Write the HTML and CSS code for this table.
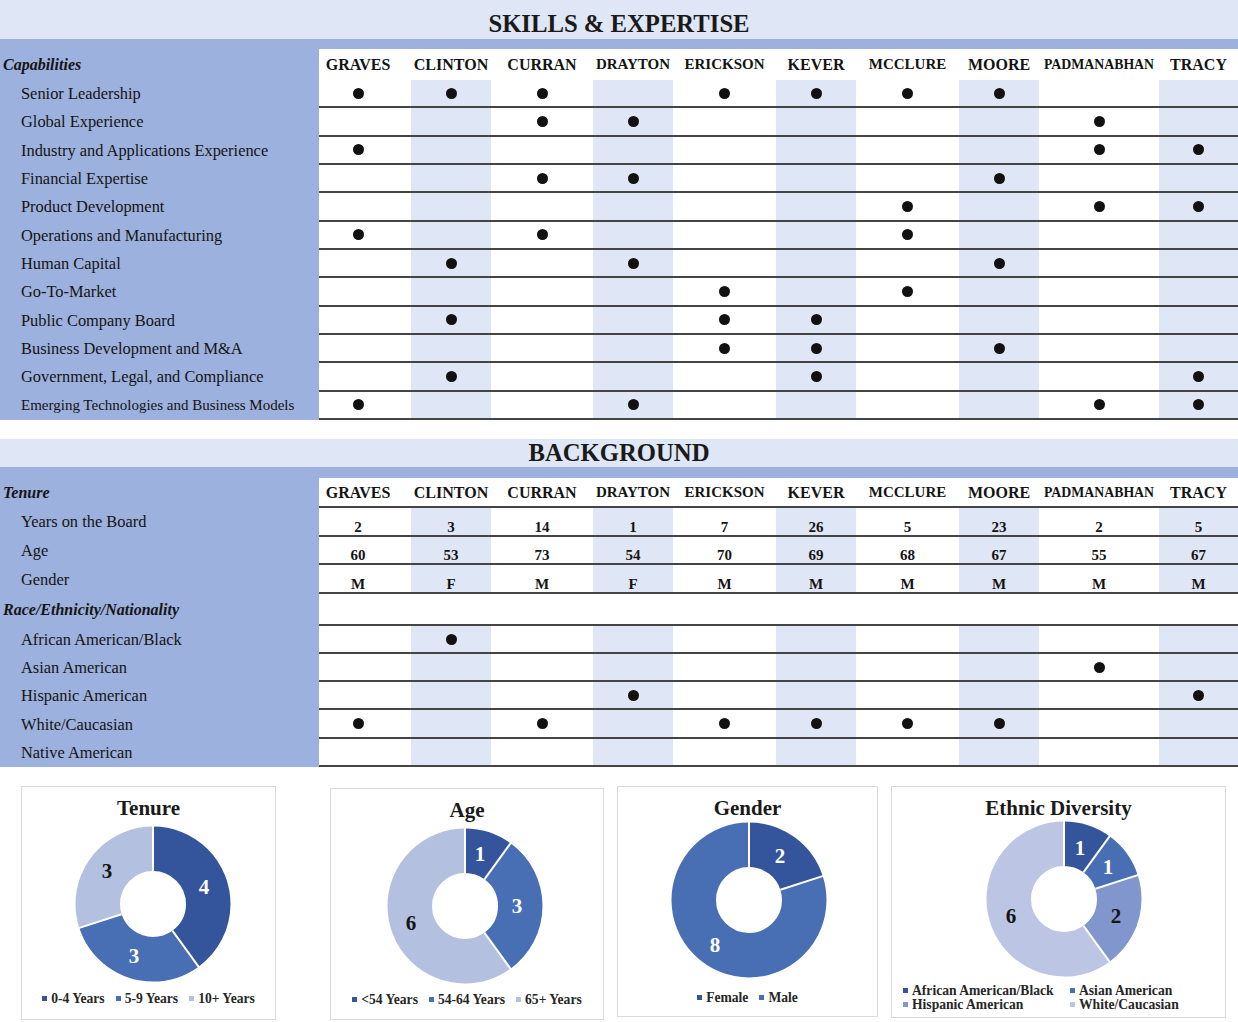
FILE: index.html
```html
<!DOCTYPE html>
<html lang="en">
<head>
<meta charset="utf-8">
<title>Board Skills &amp; Background</title>
<link rel="stylesheet" href="styles.css">
</head>
<body>
<section class="sec">
  <div class="title title-skills">SKILLS &amp; EXPERTISE</div>
  <div class="band"></div>
  <div class="row hrow">
    <div class="lab cat">Capabilities</div>
    <div class="h">GRAVES</div><div class="h">CLINTON</div><div class="h">CURRAN</div><div class="h sm">DRAYTON</div><div class="h sm">ERICKSON</div><div class="h">KEVER</div><div class="h sm">MCCLURE</div><div class="h">MOORE</div><div class="h xs">PADMANABHAN</div><div class="h">TRACY</div>
  </div>
  <div class="row data">
    <div class="lab">Senior Leadership</div>
    <div class="c"><i class="dot"></i></div><div class="c"><i class="dot"></i></div><div class="c"><i class="dot"></i></div><div class="c"></div><div class="c"><i class="dot"></i></div><div class="c"><i class="dot"></i></div><div class="c"><i class="dot"></i></div><div class="c"><i class="dot"></i></div><div class="c"></div><div class="c"></div>
  </div>
  <div class="row data">
    <div class="lab">Global Experience</div>
    <div class="c"></div><div class="c"></div><div class="c"><i class="dot"></i></div><div class="c"><i class="dot"></i></div><div class="c"></div><div class="c"></div><div class="c"></div><div class="c"></div><div class="c"><i class="dot"></i></div><div class="c"></div>
  </div>
  <div class="row data">
    <div class="lab">Industry and Applications Experience</div>
    <div class="c"><i class="dot"></i></div><div class="c"></div><div class="c"></div><div class="c"></div><div class="c"></div><div class="c"></div><div class="c"></div><div class="c"></div><div class="c"><i class="dot"></i></div><div class="c"><i class="dot"></i></div>
  </div>
  <div class="row data">
    <div class="lab">Financial Expertise</div>
    <div class="c"></div><div class="c"></div><div class="c"><i class="dot"></i></div><div class="c"><i class="dot"></i></div><div class="c"></div><div class="c"></div><div class="c"></div><div class="c"><i class="dot"></i></div><div class="c"></div><div class="c"></div>
  </div>
  <div class="row data">
    <div class="lab">Product Development</div>
    <div class="c"></div><div class="c"></div><div class="c"></div><div class="c"></div><div class="c"></div><div class="c"></div><div class="c"><i class="dot"></i></div><div class="c"></div><div class="c"><i class="dot"></i></div><div class="c"><i class="dot"></i></div>
  </div>
  <div class="row data">
    <div class="lab">Operations and Manufacturing</div>
    <div class="c"><i class="dot"></i></div><div class="c"></div><div class="c"><i class="dot"></i></div><div class="c"></div><div class="c"></div><div class="c"></div><div class="c"><i class="dot"></i></div><div class="c"></div><div class="c"></div><div class="c"></div>
  </div>
  <div class="row data">
    <div class="lab">Human Capital</div>
    <div class="c"></div><div class="c"><i class="dot"></i></div><div class="c"></div><div class="c"><i class="dot"></i></div><div class="c"></div><div class="c"></div><div class="c"></div><div class="c"><i class="dot"></i></div><div class="c"></div><div class="c"></div>
  </div>
  <div class="row data">
    <div class="lab">Go-To-Market</div>
    <div class="c"></div><div class="c"></div><div class="c"></div><div class="c"></div><div class="c"><i class="dot"></i></div><div class="c"></div><div class="c"><i class="dot"></i></div><div class="c"></div><div class="c"></div><div class="c"></div>
  </div>
  <div class="row data">
    <div class="lab">Public Company Board</div>
    <div class="c"></div><div class="c"><i class="dot"></i></div><div class="c"></div><div class="c"></div><div class="c"><i class="dot"></i></div><div class="c"><i class="dot"></i></div><div class="c"></div><div class="c"></div><div class="c"></div><div class="c"></div>
  </div>
  <div class="row data">
    <div class="lab">Business Development and M&amp;A</div>
    <div class="c"></div><div class="c"></div><div class="c"></div><div class="c"></div><div class="c"><i class="dot"></i></div><div class="c"><i class="dot"></i></div><div class="c"></div><div class="c"><i class="dot"></i></div><div class="c"></div><div class="c"></div>
  </div>
  <div class="row data">
    <div class="lab">Government, Legal, and Compliance</div>
    <div class="c"></div><div class="c"><i class="dot"></i></div><div class="c"></div><div class="c"></div><div class="c"></div><div class="c"><i class="dot"></i></div><div class="c"></div><div class="c"></div><div class="c"></div><div class="c"><i class="dot"></i></div>
  </div>
  <div class="row data">
    <div class="lab lab-small">Emerging Technologies and Business Models</div>
    <div class="c"><i class="dot"></i></div><div class="c"></div><div class="c"></div><div class="c"><i class="dot"></i></div><div class="c"></div><div class="c"></div><div class="c"></div><div class="c"></div><div class="c"><i class="dot"></i></div><div class="c"><i class="dot"></i></div>
  </div>
</section>

<section class="sec sec-bg">
  <div class="title title-bg">BACKGROUND</div>
  <div class="band band-bg"></div>
  <div class="row hrow hrow-bg">
    <div class="lab cat">Tenure</div>
    <div class="h">GRAVES</div><div class="h">CLINTON</div><div class="h">CURRAN</div><div class="h sm">DRAYTON</div><div class="h sm">ERICKSON</div><div class="h">KEVER</div><div class="h sm">MCCLURE</div><div class="h">MOORE</div><div class="h xs">PADMANABHAN</div><div class="h">TRACY</div>
  </div>
  <div class="row data vrow">
    <div class="lab">Years on the Board</div>
    <div class="c v">2</div><div class="c v">3</div><div class="c v">14</div><div class="c v">1</div><div class="c v">7</div><div class="c v">26</div><div class="c v">5</div><div class="c v">23</div><div class="c v">2</div><div class="c v">5</div>
  </div>
  <div class="row data vrow">
    <div class="lab">Age</div>
    <div class="c v">60</div><div class="c v">53</div><div class="c v">73</div><div class="c v">54</div><div class="c v">70</div><div class="c v">69</div><div class="c v">68</div><div class="c v">67</div><div class="c v">55</div><div class="c v">67</div>
  </div>
  <div class="row data vrow">
    <div class="lab">Gender</div>
    <div class="c v">M</div><div class="c v">F</div><div class="c v">M</div><div class="c v">F</div><div class="c v">M</div><div class="c v">M</div><div class="c v">M</div><div class="c v">M</div><div class="c v">M</div><div class="c v">M</div>
  </div>
  <div class="row race">
    <div class="lab cat">Race/Ethnicity/Nationality</div>
    <div class="c"></div><div class="c"></div><div class="c"></div><div class="c"></div><div class="c"></div><div class="c"></div><div class="c"></div><div class="c"></div><div class="c"></div><div class="c"></div>
  </div>
  <div class="row data erow">
    <div class="lab">African American/Black</div>
    <div class="c"></div><div class="c"><i class="dot"></i></div><div class="c"></div><div class="c"></div><div class="c"></div><div class="c"></div><div class="c"></div><div class="c"></div><div class="c"></div><div class="c"></div>
  </div>
  <div class="row data erow">
    <div class="lab">Asian American</div>
    <div class="c"></div><div class="c"></div><div class="c"></div><div class="c"></div><div class="c"></div><div class="c"></div><div class="c"></div><div class="c"></div><div class="c"><i class="dot"></i></div><div class="c"></div>
  </div>
  <div class="row data erow">
    <div class="lab">Hispanic American</div>
    <div class="c"></div><div class="c"></div><div class="c"></div><div class="c"><i class="dot"></i></div><div class="c"></div><div class="c"></div><div class="c"></div><div class="c"></div><div class="c"></div><div class="c"><i class="dot"></i></div>
  </div>
  <div class="row data erow">
    <div class="lab">White/Caucasian</div>
    <div class="c"><i class="dot"></i></div><div class="c"></div><div class="c"><i class="dot"></i></div><div class="c"></div><div class="c"><i class="dot"></i></div><div class="c"><i class="dot"></i></div><div class="c"><i class="dot"></i></div><div class="c"><i class="dot"></i></div><div class="c"></div><div class="c"></div>
  </div>
  <div class="row data erow">
    <div class="lab">Native American</div>
    <div class="c"></div><div class="c"></div><div class="c"></div><div class="c"></div><div class="c"></div><div class="c"></div><div class="c"></div><div class="c"></div><div class="c"></div><div class="c"></div>
  </div>
</section>

<section class="charts">
  <div class="chart tenure">
    <div class="chart-title">Tenure</div>
    <svg class="donut" width="160" height="160" viewBox="0 0 160 160">
      <g transform="rotate(-90 80 80)">
        <circle class="seg s1" cx="80" cy="80" r="55.25" stroke-dasharray="138.86 208.29" stroke-dashoffset="0"/>
        <circle class="seg s2" cx="80" cy="80" r="55.25" stroke-dasharray="104.14 243.01" stroke-dashoffset="-138.86"/>
        <circle class="seg s4" cx="80" cy="80" r="55.25" stroke-dasharray="104.14 243.01" stroke-dashoffset="-243.0"/>
      </g>
      <line class="sep" x1="80" y1="47" x2="80" y2="1"/>
      <line class="sep" x1="80" y1="47" x2="80" y2="1" transform="rotate(144 80 80)"/>
      <line class="sep" x1="80" y1="47" x2="80" y2="1" transform="rotate(252 80 80)"/>
      <text class="lbl w" x="131" y="63">4</text>
      <text class="lbl w" x="61" y="132">3</text>
      <text class="lbl" x="34" y="47">3</text>
    </svg>
    <div class="legend">
      <span class="li"><i class="mk m1"></i>0-4 Years</span>
      <span class="li"><i class="mk m2"></i>5-9 Years</span>
      <span class="li"><i class="mk m4"></i>10+ Years</span>
    </div>
  </div>

  <div class="chart age">
    <div class="chart-title">Age</div>
    <svg class="donut" width="160" height="160" viewBox="0 0 160 160">
      <g transform="rotate(-90 80 80)">
        <circle class="seg s1" cx="80" cy="80" r="55.25" stroke-dasharray="34.71 312.44" stroke-dashoffset="0"/>
        <circle class="seg s2" cx="80" cy="80" r="55.25" stroke-dasharray="104.14 243.01" stroke-dashoffset="-34.71"/>
        <circle class="seg s4" cx="80" cy="80" r="55.25" stroke-dasharray="208.29 138.86" stroke-dashoffset="-138.86"/>
      </g>
      <line class="sep" x1="80" y1="47" x2="80" y2="1"/>
      <line class="sep" x1="80" y1="47" x2="80" y2="1" transform="rotate(36 80 80)"/>
      <line class="sep" x1="80" y1="47" x2="80" y2="1" transform="rotate(144 80 80)"/>
      <text class="lbl w" x="95" y="28">1</text>
      <text class="lbl w" x="132" y="80">3</text>
      <text class="lbl" x="26" y="97">6</text>
    </svg>
    <div class="legend">
      <span class="li"><i class="mk m1"></i>&lt;54 Years</span>
      <span class="li"><i class="mk m2"></i>54-64 Years</span>
      <span class="li"><i class="mk m4"></i>65+ Years</span>
    </div>
  </div>

  <div class="chart gender">
    <div class="chart-title">Gender</div>
    <svg class="donut" width="160" height="160" viewBox="0 0 160 160">
      <g transform="rotate(-90 80 80)">
        <circle class="seg s1" cx="80" cy="80" r="55.25" stroke-dasharray="69.43 277.72" stroke-dashoffset="0"/>
        <circle class="seg s2" cx="80" cy="80" r="55.25" stroke-dasharray="277.72 69.43" stroke-dashoffset="-69.43"/>
      </g>
      <line class="sep" x1="80" y1="47" x2="80" y2="1"/>
      <line class="sep" x1="80" y1="47" x2="80" y2="1" transform="rotate(72 80 80)"/>
      <text class="lbl w" x="111" y="36">2</text>
      <text class="lbl w" x="46" y="125">8</text>
    </svg>
    <div class="legend">
      <span class="li"><i class="mk m1"></i>Female</span>
      <span class="li"><i class="mk m2"></i>Male</span>
    </div>
  </div>

  <div class="chart ethnic">
    <div class="chart-title">Ethnic Diversity</div>
    <svg class="donut" width="160" height="160" viewBox="0 0 160 160">
      <g transform="rotate(-90 80 80)">
        <circle class="seg s1" cx="80" cy="80" r="55.25" stroke-dasharray="34.71 312.44" stroke-dashoffset="0"/>
        <circle class="seg s2" cx="80" cy="80" r="55.25" stroke-dasharray="34.71 312.44" stroke-dashoffset="-34.71"/>
        <circle class="seg s3" cx="80" cy="80" r="55.25" stroke-dasharray="69.43 277.72" stroke-dashoffset="-69.43"/>
        <circle class="seg s5" cx="80" cy="80" r="55.25" stroke-dasharray="208.29 138.86" stroke-dashoffset="-138.86"/>
      </g>
      <line class="sep" x1="80" y1="47" x2="80" y2="1"/>
      <line class="sep" x1="80" y1="47" x2="80" y2="1" transform="rotate(36 80 80)"/>
      <line class="sep" x1="80" y1="47" x2="80" y2="1" transform="rotate(72 80 80)"/>
      <line class="sep" x1="80" y1="47" x2="80" y2="1" transform="rotate(144 80 80)"/>
      <text class="lbl w" x="96" y="29">1</text>
      <text class="lbl w" x="124" y="48">1</text>
      <text class="lbl" x="132" y="97">2</text>
      <text class="lbl" x="27" y="97">6</text>
    </svg>
    <div class="legend legend-grid">
      <span class="li"><i class="mk m1"></i>African American/Black</span>
      <span class="li"><i class="mk m2"></i>Asian American</span>
      <span class="li"><i class="mk m3"></i>Hispanic American</span>
      <span class="li"><i class="mk m5"></i>White/Caucasian</span>
    </div>
  </div>
</section>
</body>
</html>
```

FILE: styles.css
```css
* { box-sizing: border-box; }

body {
  margin: 0;
  width: 1238px;
  background: #ffffff;
  color: #141414;
  font-family: "Liberation Serif", "Times New Roman", serif;
}

.title {
  display: flex;
  align-items: center;
  justify-content: center;
  background: #dfe6f5;
  font-size: 24.7px;
  font-weight: bold;
  color: #1a1a1a;
}
.title-skills { height: 39px; padding-top: 8px; }
.title-bg { height: 28px; padding-top: 1px; }

.band { height: 10px; background: #9cb1dd; }
.band-bg { height: 11px; }

.sec-bg { margin-top: 19px; }

.row {
  display: grid;
  grid-template-columns: 319px 92px 80px 102px 80px 103px 80px 103px 80px 120px 79px;
}

.lab {
  display: flex;
  align-items: center;
  padding-left: 21px;
  background: #9cb1dd;
  font-size: 16.4px;
  white-space: nowrap;
}
.lab.cat {
  padding-left: 3px;
  font-size: 16px;
  font-weight: bold;
  font-style: italic;
}
.lab-small { font-size: 15px; }

.h {
  display: flex;
  align-items: center;
  justify-content: center;
  font-size: 16px;
  font-weight: bold;
  white-space: nowrap;
}
.h.sm { font-size: 15px; }
.h.xs { font-size: 13.8px; }
.row > :nth-child(2) { padding-right: 14px; }

.hrow { height: 31px; }
.hrow-bg { height: 30px; }
.hrow-bg .h { border-bottom: 2px solid #454545; padding-top: 2px; }

.c {
  display: flex;
  align-items: center;
  justify-content: center;
  border-bottom: 2px solid #454545;
}
.data > :nth-child(2n+3) { background: #dfe6f5; }

.data { height: 28.33px; }
.vrow { height: 28.67px; }
.race { height: 32px; }
.erow { height: 28.2px; }

.v {
  align-items: flex-end;
  padding-bottom: 0;
  font-size: 15px;
  line-height: 15px;
  font-weight: bold;
}

.dot {
  display: block;
  width: 11px;
  height: 11px;
  border-radius: 50%;
  background: #111111;
}

/* charts */
.charts {
  display: flex;
  align-items: flex-start;
  margin-top: 19px;
  padding-left: 21px;
}
.chart {
  display: flex;
  flex-direction: column;
  align-items: center;
  border: 1px solid #d9d9d9;
}
.chart.tenure { width: 255px; height: 234px; }
.chart.age { width: 274px; height: 232px; margin-left: 54px; margin-top: 2px; }
.chart.gender { width: 261px; height: 231px; margin-left: 13px; }
.chart.ethnic { width: 335px; height: 232px; margin-left: 13px; }

.chart-title {
  margin-top: 9px;
  font-size: 21px;
  line-height: 24px;
  font-weight: bold;
  color: #1a1a1a;
}

.donut { display: block; overflow: visible; }
.tenure .donut { margin-top: 4px; margin-left: 9px; }
.age .donut { margin-top: 4px; margin-left: -5px; }
.gender .donut { margin-top: 0; margin-left: 3px; }
.ethnic .donut { margin-top: -1px; margin-left: 10px; }

.seg { fill: none; stroke-width: 44.5; }
.s1 { stroke: #34549b; }
.s2 { stroke: #486eb4; }
.s3 { stroke: #8096cc; }
.s4 { stroke: #b4c0e0; }
.s5 { stroke: #bcc6e4; }

.sep { stroke: #ffffff; stroke-width: 2; }

.lbl {
  font-family: "Liberation Serif", "Times New Roman", serif;
  font-size: 21px;
  font-weight: bold;
  fill: #141414;
  text-anchor: middle;
  dominant-baseline: central;
}
.lbl.w { fill: #ffffff; }

.legend {
  display: flex;
  gap: 11px;
  font-size: 13.6px;
  line-height: 16px;
  font-weight: bold;
  color: #262626;
  white-space: nowrap;
}
.tenure .legend { margin-top: 7px; }
.age .legend { margin-top: 6px; }
.gender .legend { margin-top: 10px; }
.ethnic .legend { margin-top: 5px; }

.legend-grid {
  display: grid;
  grid-template-columns: 167px auto;
  gap: 0;
  line-height: 14px;
  align-self: flex-start;
  margin-left: 11px;
}

.li { display: inline-flex; align-items: center; }
.mk {
  display: inline-block;
  width: 5px;
  height: 5px;
  margin-right: 4px;
}
.m1 { background: #34549b; }
.m2 { background: #486eb4; }
.m3 { background: #8096cc; }
.m4 { background: #b4c0e0; }
.m5 { background: #bcc6e4; }
```
